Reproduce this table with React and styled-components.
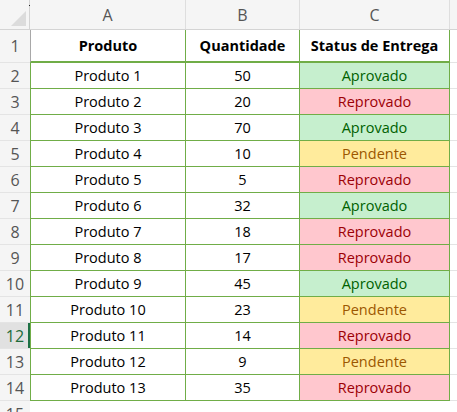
import styled, { createGlobalStyle, css } from "styled-components";

const GlobalStyle = createGlobalStyle`
	html, body {
		margin: 0;
		padding: 0;
		background: #ffffff;
	}
	* {
		box-sizing: border-box;
	}
`

const GREEN = "#70ad47";

const statusColors = {
	Aprovado: { bg: "#c6efce", fg: "#006100" },
	Reprovado: { bg: "#ffc7ce", fg: "#9c0006" },
	Pendente: { bg: "#ffeb9c", fg: "#9c5700" },
};

const rows = [
	["Produto 1", 50, "Aprovado"],
	["Produto 2", 20, "Reprovado"],
	["Produto 3", 70, "Aprovado"],
	["Produto 4", 10, "Pendente"],
	["Produto 5", 5, "Reprovado"],
	["Produto 6", 32, "Aprovado"],
	["Produto 7", 18, "Reprovado"],
	["Produto 8", 17, "Reprovado"],
	["Produto 9", 45, "Aprovado"],
	["Produto 10", 23, "Pendente"],
	["Produto 11", 14, "Reprovado"],
	["Produto 12", 9, "Pendente"],
	["Produto 13", 35, "Reprovado"],
];

const Sheet = styled.div`
	width: 457px;
	height: 412px;
	overflow: hidden;
	background: #ffffff;
	font-family: "Open Sans", "Liberation Sans", sans-serif;
	color: #000000;
`
const Row = styled.div`
	display: grid;
	grid-template-columns: 30px 156px 114px 150px 7px;
	height: ${props => props.h}px;
`
const ColHeadRow = styled(Row)`
	background: #f5f5f5;
	border-bottom: 1px solid #d4d4d4;
`
const Corner = styled.div`
	position: relative;
	border-right: 1px solid #d4d4d4;
	&::after {
		content: "";
		position: absolute;
		right: 3px;
		bottom: 3px;
		width: 0;
		height: 0;
		border-left: 15px solid transparent;
		border-bottom: 15px solid #dcdcdc;
	}
	&::before {
		content: "";
		position: absolute;
		left: 29px;
		top: 5px;
		width: 1px;
		height: 1px;
		background: #222;
	}
`
const ColLetter = styled.div`
	display: flex;
	align-items: center;
	justify-content: center;
	border-right: 1px solid #dedede;
	font-size: 16px;
	color: #555555;
	padding-top: 1px;
`
const RowNum = styled.div`
	display: flex;
	align-items: center;
	justify-content: center;
	font-size: 16px;
	color: ${props => props.active ? "#1d6b3a" : "#555555"};
	background: ${props => props.active ? "#e1e1e1" : "#f5f5f5"};
	border-bottom: 1px solid #e4e4e4;
	${props => props.active && css`
		box-shadow: inset -2px 0 0 #1e7145;
	`}
`
const Cell = styled.div`
	display: flex;
	align-items: center;
	justify-content: center;
	font-size: 14.5px;
	border-right: 1px solid ${GREEN};
	border-bottom: ${props => props.thick ? 2 : 1}px solid ${GREEN};
	background: ${props => props.bg || "#ffffff"};
	color: ${props => props.fg || "#000000"};
	font-weight: ${props => props.bold ? 700 : 400};
	${props => props.first && css`
		border-left: 1px solid ${props.headRow ? "#a8a8a8" : GREEN};
	`}
`
const Filler = styled.div`
	border-bottom: 1px solid #e4e4e4;
`

const App = () => {
	return (
		<>
			<GlobalStyle />
			<Sheet>
				<ColHeadRow h={30}>
					<Corner />
					<ColLetter>A</ColLetter>
					<ColLetter>B</ColLetter>
					<ColLetter>C</ColLetter>
					<div />
				</ColHeadRow>
				<Row h={33}>
					<RowNum>1</RowNum>
					<Cell first headRow bold thick>Produto</Cell>
					<Cell bold thick>Quantidade</Cell>
					<Cell bold thick>Status de Entrega</Cell>
					<Filler />
				</Row>
				{rows.map(([name, qty, status], i) => (
					<Row h={26} key={name}>
						<RowNum active={i + 2 === 12}>{i + 2}</RowNum>
						<Cell first>{name}</Cell>
						<Cell>{qty}</Cell>
						<Cell bg={statusColors[status].bg} fg={statusColors[status].fg}>{status}</Cell>
						<Filler />
					</Row>
				))}
				<Row h={26}>
					<RowNum>15</RowNum>
					<div />
					<div />
					<div />
					<div />
				</Row>
			</Sheet>
		</>
	);
};

export default App;
